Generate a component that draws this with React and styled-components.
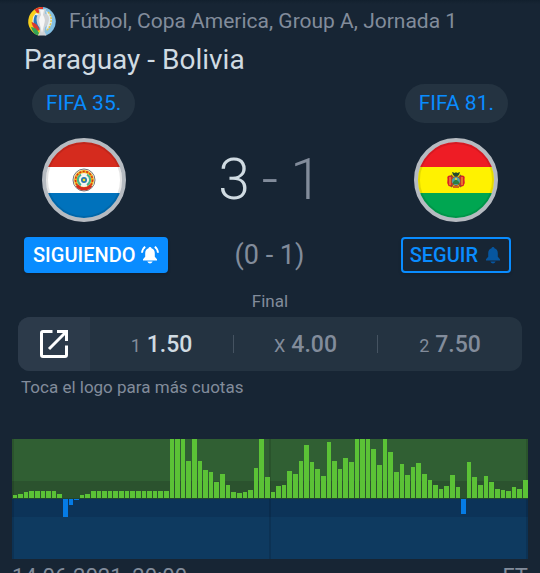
import React from "react";
import styled, { createGlobalStyle } from "styled-components";

const GlobalStyle = createGlobalStyle`
  *, *::before, *::after { box-sizing: border-box; }
  html { background: #172534; scrollbar-width: none; }
  body { margin: 0; font-family: Roboto, "Liberation Sans", sans-serif; color: #828c9b; }
  button { font: inherit; cursor: pointer; }
  svg { display: block; }
`;

const Page = styled.main`
  display: flex;
  flex-direction: column;
  min-height: 100vh;
  background: linear-gradient(#12202e, #172534 4px);
`;

const Competition = styled.div`
  display: flex;
  align-items: center;
  gap: 12px;
  height: 42px;
  padding: 0 26px;
  font-size: 21px;
  white-space: nowrap;
`;

const Title = styled.h1`
  margin: 0;
  padding: 0 24px;
  font-size: 28px;
  line-height: 36px;
  font-weight: 400;
  color: #d0dbe2;
`;

const SplitRow = styled.div`
  display: flex;
  align-items: center;
  justify-content: space-between;
  padding: 0 ${(p) => p.$inset}px;
  margin-top: ${(p) => p.$gap}px;
`;

const Chip = styled.span`
  padding: 0 14px;
  border-radius: 20px;
  background: #243341;
  color: #098cff;
  font-size: 21px;
  line-height: 39px;
`;

const Score = styled.div`
  display: flex;
  gap: 12px;
  font-size: 57px;
  line-height: 84px;
  font-weight: 300;
`;

const Lead = styled.span`
  color: #d0dbe2;
`;

const FollowRow = styled.div`
  display: grid;
  grid-template-columns: 1fr auto 1fr;
  align-items: center;
  margin-top: 15px;
  padding: 0 29px 0 28px;
`;

const FollowButton = styled.button`
  display: flex;
  align-items: center;
  justify-self: ${(p) => (p.$active ? "start" : "end")};
  gap: 6px;
  height: 36px;
  margin-left: ${(p) => (p.$active ? "-4px" : "0")};
  padding: 0 7px;
  border: 2px solid #098cff;
  border-radius: 4px;
  background: ${(p) => (p.$active ? "#098cff" : "transparent")};
  color: ${(p) => (p.$active ? "#fff" : "#098cff")};
  font-size: 20px;
  font-weight: 500;
  box-shadow: 0 2px 3px rgba(0, 0, 0, 0.15);

  svg {
    color: ${(p) => (p.$active ? "#fff" : "#0656a0")};
  }
`;

const HalfTime = styled.div`
  font-size: 27px;
  line-height: 32px;
`;

const Status = styled.div`
  margin-top: 18px;
  font-size: 17px;
  line-height: 20px;
  text-align: center;
`;

const OddsBar = styled.section`
  display: grid;
  grid-template-columns: 72px repeat(3, 1fr);
  height: 54px;
  margin: 6px 18px 0;
  overflow: hidden;
  border-radius: 12px;
  background: #243341;
`;

const OpenButton = styled.button`
  display: grid;
  place-items: center;
  padding: 0;
  border: 0;
  background: #2c3a4a;
  color: #fff;
`;

const Odd = styled.div`
  display: flex;
  align-items: baseline;
  justify-content: center;
  gap: 6px;
  height: 18px;
  align-self: center;
  border-right: ${(p) => (p.$last ? "0" : "1px solid #455361")};
  font-size: 18px;
  line-height: 20px;
`;

const Price = styled.strong`
  font-size: 23px;
  font-weight: 500;
  color: ${(p) => (p.$win ? "#d0dbe2" : "inherit")};
`;

const Note = styled.p`
  margin: 6px 21px 0;
  font-size: 17px;
  line-height: 20px;
`;

const Chart = styled.svg`
  width: calc(100% - 24px);
  height: 120px;
  margin: 42px 12px 0;
`;

const Footer = styled.footer`
  display: flex;
  justify-content: space-between;
  padding: 4px 12px 0;
  font-size: 22px;
  line-height: 28px;
`;

const firstHalf = [
  3, 4, 6, 7, 7, 7, 7, 7, 4, -18, -6, -1, 3, 4, 7, 7, 7, 7, 7, 7, 7, 7, 7, 7, 7,
  7, 7, 7, 59, 59, 59, 37, 59, 37, 28, 26, 16, 24, 13, 6, 5, 6, 8, 30, 59, 21,
];
const secondHalf = [
  6, 12, 13, 27, 24, 37, 53, 36, 29, 22, 56, 37, 29, 40, 36, 59, 59, 59, 49, 33,
  59, 46, 26, 34, 23, 31, 35, 24, 18, 13, 9, 12, 23, 11, -15, 36, 21, 13, 22, 16,
  9, 8, 7, 11, 9, 18,
];

function Bars({ values, start }) {
  const pitch = 5.61;
  return values.map((v, i) => {
    const x = start + Math.floor(i * pitch);
    const next = start + Math.floor((i + 1) * pitch);
    return (
      <rect
        key={i}
        x={x}
        y={v > 0 ? 59 - v : 60}
        width={next - x - 1}
        height={Math.abs(v)}
        fill={v > 0 ? "#5bc236" : "#057be5"}
      />
    );
  });
}

function MomentumChart() {
  return (
    <Chart viewBox="0 0 516 120" preserveAspectRatio="none" shapeRendering="crispEdges" role="img" aria-label="Paraguay - Bolivia">
      <rect width="516" height="60" fill="#305f33" />
      <rect y="42" width="516" height="18" fill="#2b522e" />
      <rect y="60" width="516" height="60" fill="#0e3a60" />
      <rect y="60" width="516" height="18" fill="#0c3358" />
      {[0, 257, 514].map((x) => (
        <rect key={x} x={x} width="2" height="120" fill="#000" opacity="0.12" />
      ))}
      <rect y="59" width="516" height="1" fill="#22462f" />
      <Bars values={firstHalf} start={1} />
      <Bars values={secondHalf} start={259} />
    </Chart>
  );
}

function Flag({ id, name, colors, children }) {
  return (
    <svg width="84" height="84" viewBox="0 0 84 84" role="img" aria-label={name}>
      <clipPath id={id}>
        <circle cx="42" cy="42" r="39" />
      </clipPath>
      <g clipPath={`url(#${id})`}>
        <rect width="84" height="29" fill={colors[0]} />
        <rect y="29" width="84" height="26" fill={colors[1]} />
        <rect y="55" width="84" height="29" fill={colors[2]} />
      </g>
      {children}
      <circle cx="42" cy="42" r="37" fill="none" stroke="#000" strokeWidth="2" opacity="0.1" />
      <circle cx="42" cy="42" r="40" fill="none" stroke="#b6bbc1" strokeWidth="4" />
    </svg>
  );
}

function ParaguayFlag() {
  return (
    <Flag id="flag-py" name="Paraguay" colors={["#d52b1e", "#fff", "#0072bc"]}>
      <circle cx="42" cy="42" r="11" fill="#f5f3ee" stroke="#777" strokeWidth="1" />
      <circle cx="42" cy="42" r="8.5" fill="none" stroke="#f0b51d" strokeWidth="3" />
      <circle cx="42" cy="42" r="8.5" fill="none" stroke="#d52b1e" strokeWidth="1.5" strokeDasharray="2 1.5" />
      <path d="M35 47.5a9 9 0 0 0 14 0" fill="none" stroke="#d52b1e" strokeWidth="3" />
      <path d="M39 36.5a6 6 0 0 0 0 10.5M45 36.5a6 6 0 0 1 0 10.5" fill="none" stroke="#45b58b" strokeWidth="2" />
      <circle cx="42" cy="42" r="3" fill="#2878ad" />
      <circle cx="42" cy="42" r="1.3" fill="#f7e31c" />
    </Flag>
  );
}

function BoliviaFlag() {
  return (
    <Flag id="flag-bo" name="Bolivia" colors={["#ee1c25", "#fff200", "#00a651"]}>
      <path d="M36 37.500q-3.500 0-2.500 3.500-1 4 1 7l4 1V38zM48 37.500q3.500 0 2.500 3.500 1 4-1 7l-4 1V38z" fill="#d91f2a" />
      <path d="M36 39v8M48 39v8" stroke="#f4c22c" strokeWidth="1" />
      <path d="M37 37l10 12M47 37L37 49" stroke="#83572b" strokeWidth="1.5" />
      <circle cx="42" cy="43" r="4.5" fill="#4ba5a8" stroke="#a54d25" strokeWidth="1" />
      <path d="M39 44l3-3 3 3v2h-6z" fill="#2d7f42" />
      <circle cx="42" cy="41" r="1" fill="#f6db37" />
      <path d="M38 34l3 1 1-1 1 1 3-1-1 3-2 1.5h-2L39 37z" fill="#24492e" />
      <path d="M39 49h6" stroke="#bf3028" strokeWidth="1.5" />
    </Flag>
  );
}

function CupLogo() {
  return (
    <svg width="31" height="31" viewBox="0 0 31 31" aria-hidden="true">
      <path d="M16 1A14.500 14.500 0 0 0 13 29.500L16 26z" fill="#f7cf1b" />
      <path d="M16 1A14.500 14.500 0 0 1 19 29.500L16 26z" fill="#83bfe2" />
      <path d="M8.500 3.500Q12 .5 17 1v5l-6 1z" fill="#e2352b" />
      <path d="M20 5q7 3 6 11-1 6-6 8 3-9 0-19z" fill="#e4eef2" />
      <path d="M22 6q4 4 3 10t-5 9" fill="none" stroke="#e3c54a" strokeWidth="1.500" strokeDasharray="2 1" />
      <path d="M10 7q-5 5-3 11l6 5V8z" fill="#e9eef0" />
      <path d="M9 9q-3 7 0 11l5 4V10z" fill="#2776b8" />
      <path d="M5.500 16q6 1 8 8l-2 1q-5-3-6-9z" fill="#da3a2f" />
      <path d="M5 21q5 0 8 6l-1 2.500q-5-1.500-7-8.500z" fill="#32a456" />
      <path d="M12.500 3h7.500l-1 4.500q4 1 4 5.500 0 5-4 8.500l-.5 4 2 4h-8.500l2-4-.5-4Q10.500 18 10.500 13q0-4 3-5.500z" fill="#cfd2d5" />
      <path d="M14 4h4l-1 5q3 4 1 10l-2 8-2-8q-2-6 1-10z" fill="#f6f6f6" />
    </svg>
  );
}

function BellIcon({ ringing }) {
  return (
    <svg width="18" height="18" viewBox="0 0 18 18" fill="currentColor" aria-hidden="true">
      <path d="M9 1Q10.300 1 10.500 2.300Q13.800 3.300 13.800 7.200V10.800L16 13.300V14.500H2V13.300L4.200 10.800V7.200Q4.200 3.300 7.500 2.300Q7.700 1 9 1Z" />
      <path d="M6.300 15.500H11.700Q10.700 17.500 9 17.500T6.300 15.500Z" />
      {ringing && (
        <path d="M4.200 .8Q1.300 3 1 6.800M13.800 .8Q16.700 3 17 6.800" fill="none" stroke="currentColor" strokeWidth="1.900" />
      )}
    </svg>
  );
}

function OpenIcon() {
  return (
    <svg width="28" height="28" viewBox="0 0 28 28" fill="none" stroke="currentColor" strokeWidth="3" aria-hidden="true">
      <path d="M12.500 1.500H3Q1.500 1.500 1.500 3V25Q1.500 26.500 3 26.500H25Q26.500 26.500 26.500 25V15.500" />
      <path d="M17 1.500H26.500V11M26 2L9 19" />
    </svg>
  );
}

export default function App() {
  return (
    <>
      <GlobalStyle />
      <Page>
        <Competition>
          <CupLogo />
          <span>Fútbol, Copa America, Group A, Jornada 1</span>
        </Competition>
        <Title>Paraguay - Bolivia</Title>
        <SplitRow $inset={32} $gap={6}>
          <Chip>FIFA 35.</Chip>
          <Chip>FIFA 81.</Chip>
        </SplitRow>
        <SplitRow $inset={42} $gap={15}>
          <ParaguayFlag />
          <Score>
            <Lead>3</Lead>
            <span>-</span>
            <span>1</span>
          </Score>
          <BoliviaFlag />
        </SplitRow>
        <FollowRow>
          <FollowButton type="button" aria-pressed="true" $active>
            SIGUIENDO
            <BellIcon ringing />
          </FollowButton>
          <HalfTime>(0 - 1)</HalfTime>
          <FollowButton type="button" aria-pressed="false">
            SEGUIR
            <BellIcon />
          </FollowButton>
        </FollowRow>
        <Status>Final</Status>
        <OddsBar>
          <OpenButton type="button" aria-label="Cuotas">
            <OpenIcon />
          </OpenButton>
          <Odd>
            1 <Price $win>1.50</Price>
          </Odd>
          <Odd>
            X <Price>4.00</Price>
          </Odd>
          <Odd $last>
            2 <Price>7.50</Price>
          </Odd>
        </OddsBar>
        <Note>Toca el logo para más cuotas</Note>
        <MomentumChart />
        <Footer>
          <time dateTime="2021-06-14T20:00">14.06.2021, 20:00</time>
          <span>FT</span>
        </Footer>
      </Page>
    </>
  );
}
